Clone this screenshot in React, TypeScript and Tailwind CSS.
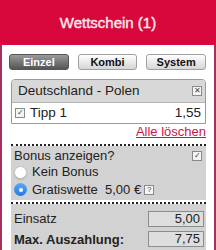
import React from "react";

function Box({ children, className = "" }: { children: React.ReactNode; className?: string }) {
  return (
    <span
      className={
        "flex h-[10px] w-[10px] shrink-0 items-center justify-center border border-[#8a8a8a] bg-[#f4f4f4] text-[8px] leading-none text-[#444] " +
        className
      }
    >
      {children}
    </span>
  );
}

function Field({ value }: { value: string }) {
  return (
    <div className="h-[16px] w-[56px] border border-[#8c8c8c] bg-[#dedede] pr-[3px] text-right text-[13px] leading-[14px] text-[#222]">
      {value}
    </div>
  );
}

function Dots() {
  return <div className="ml-[9px] mr-[8px] border-t-2 border-dotted border-[#222]" />;
}

export default function App() {
  return (
    <div
      className="flex h-[250px] w-[216px] flex-col overflow-hidden bg-white text-[#222]"
      style={{ fontFamily: '"Liberation Sans", Arial, sans-serif' }}
    >
      <header className="flex h-[45px] shrink-0 items-center justify-center bg-[#d9083c] pt-[1px] text-[15px] text-[#fbe9ee] [-webkit-text-stroke:0.4px_#fbe9ee]">
        Wettschein (1)
      </header>

      <div className="flex flex-1 flex-col border-x-2 border-[#a3305e]">
        <div className="flex gap-[9px] pl-[7px] pr-[8px] pt-[9px]">
          <button className="h-[16px] flex-1 rounded-[3px] border border-[#555] bg-gradient-to-b from-[#9a9a9a] to-[#555] text-[11px] font-bold leading-[14px] text-white">
            Einzel
          </button>
          <button className="h-[16px] flex-1 rounded-[3px] border border-[#a0a0a0] bg-gradient-to-b from-white to-[#d6d6d6] text-[11px] font-bold leading-[14px] text-[#111]">
            Kombi
          </button>
          <button className="h-[16px] flex-1 rounded-[3px] border border-[#a0a0a0] bg-gradient-to-b from-white to-[#d6d6d6] text-[11px] font-bold leading-[14px] text-[#111]">
            System
          </button>
        </div>

        <div className="ml-[9px] mr-[8px] mt-[9px] overflow-hidden rounded-t-[4px] border border-[#9a9a9a]">
          <div className="flex h-[23px] items-center justify-between border-b border-[#b5b5b5] bg-[#d8d8d8] pl-[6px] pr-[3px] text-[13.5px]">
            <span>Deutschland - Polen</span>
            <Box>✕</Box>
          </div>
          <div className="flex h-[20px] items-center justify-between bg-white pl-[3px] pr-[4px] text-[13.5px]">
            <span className="flex items-center gap-[5px]">
              <Box>✓</Box>
              Tipp 1
            </span>
            <span>1,55</span>
          </div>
        </div>

        <div className="ml-[9px] mr-[8px] text-right text-[13px] leading-[15px] text-[#c8164a] underline">
          Alle löschen
        </div>

        <div className="mt-[5px]">
          <Dots />
        </div>

        <div className="ml-[9px] mr-[8px] flex flex-col bg-[#d2d2d2] px-[3px] text-[13px]">
          <div className="flex h-[18px] items-center justify-between pr-[1px] pt-[1px]">
            <span>Bonus anzeigen?</span>
            <Box>✓</Box>
          </div>
          <div className="flex h-[16px] items-center gap-[5px]">
            <span className="h-[13px] w-[13px] rounded-full border border-[#c4c4c4] bg-white shadow-[0_1px_1px_rgba(0,0,0,0.15)]" />
            Kein Bonus
          </div>
          <div className="flex h-[20px] items-center gap-[5px] pb-[1px]">
            <span className="flex h-[13px] w-[13px] items-center justify-center rounded-full bg-gradient-to-b from-[#5aa8f8] to-[#1f7ae8]">
              <span className="h-[4px] w-[4px] rounded-full bg-white" />
            </span>
            <span>Gratiswette&nbsp; 5,00 €</span>
            <Box className="-ml-[2px]">?</Box>
          </div>
        </div>

        <div className="mt-[2px]">
          <Dots />
        </div>

        <div className="ml-[9px] mr-[8px] flex flex-col gap-[1px] bg-[#d2d2d2] pb-[1px] pl-[3px] pr-[2px] pt-[5px] text-[13px]">
          <div className="flex items-center justify-between">
            <span>Einsatz</span>
            <Field value="5,00" />
          </div>
          <div className="flex items-center justify-between">
            <span className="font-bold">Max. Auszahlung:</span>
            <Field value="7,75" />
          </div>
        </div>
        <div className="mt-[1px]">
          <Dots />
        </div>
      </div>
    </div>
  );
}
